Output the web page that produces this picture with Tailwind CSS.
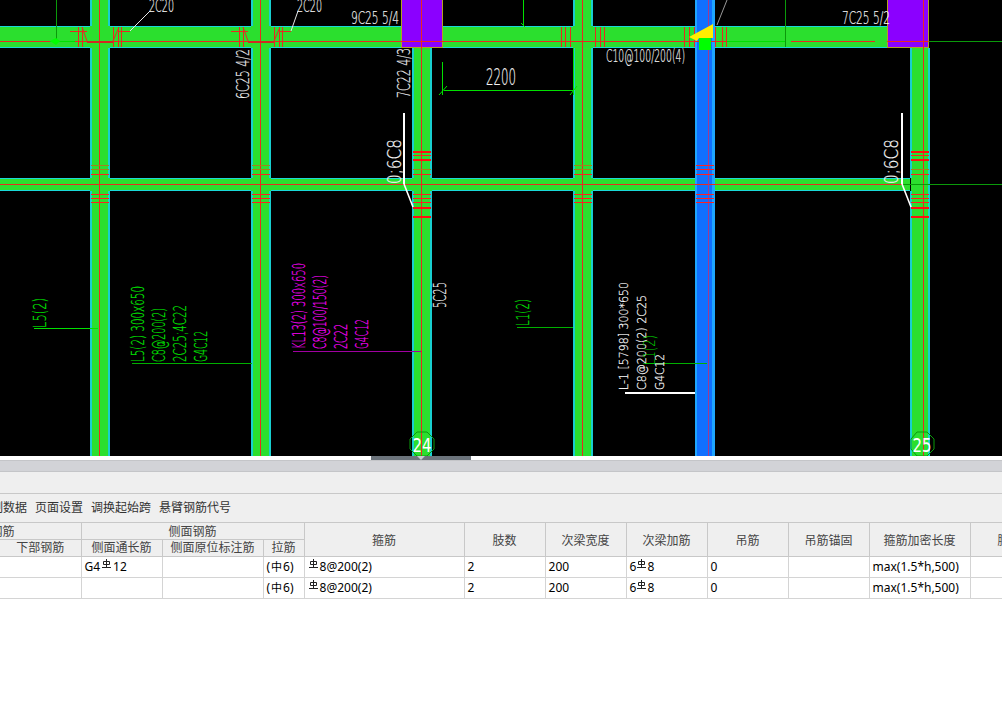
<!DOCTYPE html>
<html lang="zh">
<head>
  <meta charset="UTF-8">
  <title>梁平法表格</title>
  <script src="https://cdn.jsdelivr.net/npm/@tailwindcss/browser@4"></script>
</head>
<body class="bg-white w-[1002px] h-[727px] overflow-hidden font-['Noto_Sans','Noto_Sans_CJK_SC',sans-serif] text-[12px]">

  <!-- 图纸区域 -->
  <svg class="block" width="1002" height="456" viewBox="0 0 1002 456" font-family="DejaVu Sans, Liberation Sans, sans-serif" font-weight="200">
    <rect width="1002" height="456" fill="#000"/>
    <g shape-rendering="crispEdges">
      <!-- 框架梁 -->
      <rect x="0" y="26" width="887" height="22" fill="#2bdf2e"/>
      <rect x="0" y="178" width="910" height="13" fill="#2bdf2e"/>
      <rect x="91" y="0" width="18" height="456" fill="#2bdf2e"/>
      <rect x="252" y="0" width="18" height="456" fill="#2bdf2e"/>
      <rect x="413" y="48" width="18" height="408" fill="#2bdf2e"/>
      <rect x="574" y="0" width="18" height="456" fill="#2bdf2e"/>
      <rect x="911" y="48" width="18" height="408" fill="#2bdf2e"/>
      <!-- 青色边线 -->
      <path fill="none" stroke="#19d8d8" d="M0 26.5H90M110 26.5H251M271 26.5H401M443 26.5H573M593 26.5H892M0 47.5H90M110 47.5H251M271 47.5H401M443 47.5H573M593 47.5H887M0 178.5H90M110 178.5H251M271 178.5H412M432 178.5H573M593 178.5H910M0 190.5H90M110 190.5H251M271 190.5H412M432 190.5H573M593 190.5H910"/>
      <path fill="none" stroke="#18cfd0" stroke-width="2" d="M91 0V26M109 0V26M91 48V178M109 48V178M91 191V456M109 191V456M252 0V26M270 0V26M252 48V178M270 48V178M252 191V456M270 191V456M413 48V178M431 48V178M413 191V456M431 191V456M574 0V26M592 0V26M574 48V178M592 48V178M574 191V456M592 191V456M911 48V178M929 48V456M911 191V456"/>
      <!-- 蓝色选中梁 -->
      <rect x="695" y="0" width="20" height="456" fill="#1ea6ff"/>
      <rect x="697" y="0" width="15" height="456" fill="#1070ff"/>
      <!-- 柱 -->
      <rect x="401.5" y="-1" width="41" height="48.5" fill="#8b00ff" stroke="#b5a020"/>
      <rect x="887.5" y="-1" width="41" height="48.5" fill="#8b00ff" stroke="#b5a020"/>
      <!-- 中心红线 -->
      <path fill="none" stroke="#e82a20" d="M0 41.5H727M791 41.5H875M887 41.5H929M0 184.5H903M99.5 0V456M260.5 0V456M421.5 0V456M582.5 0V456M923.5 0V456"/>
      <path fill="none" stroke="#a03a90" d="M708.5 0V456"/>
      <path fill="none" stroke="#d02a20" stroke-width="2" d="M87 42H113M248 42H274"/>
      <!-- 箍筋加密线 -->
      <path fill="none" stroke="#a4801c" d="M91 165.5H109M91 169.5H109M252 165.5H270M252 169.5H270M574 165.5H592M574 169.5H592M413 169.5H431M911 169.5H929"/>
      <path fill="none" stroke="#ff2020" d="M91 174.5H109M91 194.5H109M91 198.5H109M91 202.5H109M252 174.5H270M252 194.5H270M252 198.5H270M252 202.5H270M574 174.5H592M574 194.5H592M574 198.5H592M574 202.5H592M696 165.5H714M696 169.5H714M696 174.5H714M696 194.5H714M696 198.5H714M696 202.5H714M413 174.5H431M413 194.5H431M413 198.5H431M413 202.5H431M911 174.5H929M911 194.5H929M911 198.5H929M911 202.5H929"/>
      <path fill="none" stroke="#ff1010" stroke-width="2" d="M413 152H431M413 160H431M413 208H431M413 217H431M911 152H929M911 160H929M911 208H929M911 217H929"/>
      <path fill="none" stroke="#ff2020" d="M413 155.5H431M911 155.5H929"/>
      <!-- 梁上竖向箍筋 -->
      <path fill="none" stroke="#e82a20" d="M78.5 27V47M82.5 27V47M113.5 27V47M118.5 27V47M121.5 27V47M239.5 27V47M243.5 27V47M274.5 27V47M279.5 27V47M282.5 27V47M561.5 27V47M565.5 27V47M570.5 27V47M595.5 27V47M600.5 27V47M604.5 27V47M684.5 27V47M689.5 27V47M694.5 27V47M715.5 27V47M722.5 27V47M726.5 27V47M70 31.5H87M231 31.5H248M119 31.5H130M280 31.5H291"/>
      <!-- 绿色标注线 -->
      <path fill="none" stroke="#0a9a0a" d="M56.5 0V41M785.5 0V47M929 41.5H1002M903 184.5H1002"/>
      <path fill="none" stroke="#00e000" d="M523.5 0V26M50 41.5H75M727 41.5H785M443.5 90.5H573M442.5 62V95M573.5 48V95M34 328.5H98"/>
      <path fill="none" stroke="#00b000" d="M132 363.5H252M517 327.5H573M645 363.5H707"/>
      <path fill="none" stroke="#a000a0" d="M293 351.5H421"/>
      <path fill="none" stroke="#fff" stroke-width="2" d="M404 113V184M902 113V184"/>
      <rect x="625" y="392" width="70" height="2" fill="#fff"/>
      <rect x="699" y="38" width="12" height="12" fill="#00ff00"/>
    </g>

    <!-- 斜线 -->
    <path fill="none" stroke="#e82a20" d="M82 27L87 41M113 41L119 27M243 27L248 41M274 41L280 27"/>
    <path fill="none" stroke="#00e000" d="M439 95L447 86M570 95L577 86M521 23L525 27"/>
    <path fill="none" stroke="#e8e8e8" d="M130 31L150 11M291 31L298 11"/>
    <path fill="none" stroke="#fff" stroke-width="1.6" d="M404 184L413 207M902 184L911 207"/>
    <path fill="none" stroke="#999" d="M717 25L727 0"/>
    <polygon points="689,37 713,24 713,38 699,38 697,41" fill="#ffee00"/>
    <polygon points="50,41 56,38 60,41 56,45" fill="#00ff00"/>

    <!-- 水平文字 -->
    <g fill="#f4f4f4" stroke="#f4f4f4" stroke-width="0.2" font-size="17">
      <text x="149" y="12" textLength="25" lengthAdjust="spacingAndGlyphs">2C20</text>
      <text x="297" y="12" textLength="25" lengthAdjust="spacingAndGlyphs">2C20</text>
      <text x="351" y="24" textLength="48" lengthAdjust="spacingAndGlyphs">9C25 5/4</text>
      <text x="842" y="24" textLength="48" lengthAdjust="spacingAndGlyphs">7C25 5/2</text>
      <text x="606" y="62" textLength="79" lengthAdjust="spacingAndGlyphs">C10@100/200(4)</text>
      <text x="486" y="85" textLength="30" lengthAdjust="spacingAndGlyphs" font-size="23">2200</text>
    </g>

    <!-- 竖向文字 -->
    <g fill="#f4f4f4" stroke="#f4f4f4" stroke-width="0.2" font-size="17">
      <text transform="translate(249 99) rotate(-90)" textLength="50" lengthAdjust="spacingAndGlyphs">6C25 4/2</text>
      <text transform="translate(410 98) rotate(-90)" textLength="50" lengthAdjust="spacingAndGlyphs">7C22 4/3</text>
      <text transform="translate(446 308) rotate(-90)" textLength="26" lengthAdjust="spacingAndGlyphs">5C25</text>
      <text transform="translate(401 184) rotate(-90)" textLength="45" lengthAdjust="spacingAndGlyphs" font-size="20">0;6C8</text>
      <text transform="translate(898 184) rotate(-90)" textLength="45" lengthAdjust="spacingAndGlyphs" font-size="20">0;6C8</text>
    </g>
    <g fill="#00e800" stroke="#00e800" stroke-width="0.2" font-size="17">
      <text transform="translate(46 328) rotate(-90)" textLength="30" lengthAdjust="spacingAndGlyphs">L5(2)</text>
      <text transform="translate(144 362) rotate(-90)" textLength="76" lengthAdjust="spacingAndGlyphs">L5(2) 300x650</text>
      <text transform="translate(165 362) rotate(-90)" textLength="54" lengthAdjust="spacingAndGlyphs">C8@200(2)</text>
      <text transform="translate(186 362) rotate(-90)" textLength="57" lengthAdjust="spacingAndGlyphs">2C25;4C22</text>
      <text transform="translate(207 362) rotate(-90)" textLength="31" lengthAdjust="spacingAndGlyphs">G4C12</text>
      <text transform="translate(529 326) rotate(-90)" textLength="27" lengthAdjust="spacingAndGlyphs">L1(2)</text>
    </g>
    <g fill="#ff00ff" stroke="#ff00ff" stroke-width="0.2" font-size="17">
      <text transform="translate(305 349) rotate(-90)" textLength="86" lengthAdjust="spacingAndGlyphs">KL13(2) 300x650</text>
      <text transform="translate(326 349) rotate(-90)" textLength="74" lengthAdjust="spacingAndGlyphs">C8@100/150(2)</text>
      <text transform="translate(347 349) rotate(-90)" textLength="25" lengthAdjust="spacingAndGlyphs">2C22</text>
      <text transform="translate(368 349) rotate(-90)" textLength="30" lengthAdjust="spacingAndGlyphs">G4C12</text>
    </g>
    <g fill="#fff" stroke="#fff" stroke-width="0.2" font-size="13">
      <text transform="translate(628 390) rotate(-90)" textLength="108" lengthAdjust="spacingAndGlyphs">L-1 [5798] 300*650</text>
      <text transform="translate(646 390) rotate(-90)" textLength="95" lengthAdjust="spacingAndGlyphs">C8@200(2) 2C25</text>
      <text transform="translate(664 390) rotate(-90)" textLength="36" lengthAdjust="spacingAndGlyphs">G4C12</text>
    </g>
    <text transform="translate(655 365) rotate(-90)" textLength="30" lengthAdjust="spacingAndGlyphs" fill="#00d000" font-size="15">L1(2)</text>

    <!-- 轴号 -->
    <polygon points="417,432 427,432 434,439 434,449 427,456 417,456 410,449 410,439" fill="none" stroke="#0a9a0a"/>
    <polygon points="917,432 927,432 934,439 934,449 927,456 917,456 911,449 911,439" fill="none" stroke="#0a9a0a"/>
    <text x="412.5" y="452" fill="#fff" font-size="20" font-weight="400" textLength="19" lengthAdjust="spacingAndGlyphs">24</text>
    <text x="912.5" y="452" fill="#fff" font-size="20" font-weight="400" textLength="19" lengthAdjust="spacingAndGlyphs">25</text>
  </svg>

  <!-- 分隔条 -->
  <div class="h-1 bg-white flex justify-start">
    <div class="ml-[371px] w-[100px] h-1 bg-[#6c747c]">
      <svg class="block ml-[46px]" width="8" height="4" viewBox="0 0 8 4"><polygon points="0,0 8,0 4,4" fill="#c8ccd0"/></svg>
    </div>
  </div>
  <div class="h-3 bg-[#d2d3d7] border-t border-b border-[#c4c5c8]"></div>

  <!-- 工具栏 -->
  <div class="h-[22px] bg-[#efefef] border-b border-[#c8c8c8]"></div>
  <div class="h-[29px] bg-[#efefef] border-b border-[#c8c8c8] flex items-center gap-2 -ml-[21px] text-[#333] whitespace-nowrap">
    <span>复制数据</span>
    <span>页面设置</span>
    <span>调换起始跨</span>
    <span>悬臂钢筋代号</span>
  </div>

  <!-- 表格 -->
  <div class="w-[1002px] overflow-hidden">
  <table class="table-fixed border-collapse w-[1049px] text-black leading-[16px]">
    <colgroup>
      <col class="w-[81px]"><col class="w-[81px]"><col class="w-[101px]"><col class="w-[41px]"><col class="w-[160px]"><col class="w-[81px]"><col class="w-[81px]"><col class="w-[81px]"><col class="w-[81px]"><col class="w-[81px]"><col class="w-[101px]"><col class="w-[79px]">
    </colgroup>
    <thead class="bg-[#efefef] text-[#444]">
      <tr class="h-[16px] leading-[13px]">
        <th class="font-normal border-b border-r border-[#c8c8c8] p-0 pt-[2px] overflow-hidden"><div class="flex justify-end pr-[66px] whitespace-nowrap">钢筋</div></th>
        <th colspan="3" class="font-normal border-b border-r border-[#c8c8c8] p-0 pt-[2px]">侧面钢筋</th>
        <th rowspan="2" class="font-normal border-b border-r border-[#c8c8c8] p-0 pt-[2px]">箍筋</th>
        <th rowspan="2" class="font-normal border-b border-r border-[#c8c8c8] p-0 pt-[2px]">肢数</th>
        <th rowspan="2" class="font-normal border-b border-r border-[#c8c8c8] p-0 pt-[2px]">次梁宽度</th>
        <th rowspan="2" class="font-normal border-b border-r border-[#c8c8c8] p-0 pt-[2px]">次梁加筋</th>
        <th rowspan="2" class="font-normal border-b border-r border-[#c8c8c8] p-0 pt-[2px]">吊筋</th>
        <th rowspan="2" class="font-normal border-b border-r border-[#c8c8c8] p-0 pt-[2px]">吊筋锚固</th>
        <th rowspan="2" class="font-normal border-b border-r border-[#c8c8c8] p-0 pt-[2px]">箍筋加密长度</th>
        <th rowspan="2" class="font-normal border-b border-r border-[#c8c8c8] p-0 pt-[2px]">腰筋</th>
      </tr>
      <tr class="h-[17px]">
        <th class="font-normal border-b border-r border-[#c8c8c8] p-0">下部钢筋</th>
        <th class="font-normal border-b border-r border-[#c8c8c8] p-0">侧面通长筋</th>
        <th class="font-normal border-b border-r border-[#c8c8c8] p-0">侧面原位标注筋</th>
        <th class="font-normal border-b border-r border-[#c8c8c8] p-0">拉筋</th>
      </tr>
    </thead>
    <tbody>
      <tr class="h-[21px]">
        <td class="border-b border-r border-[#d4d4d4] p-0 pl-[3px]"></td>
        <td class="border-b border-r border-[#d4d4d4] p-0 pl-[3px]">G4<svg class="inline-block align-[2px] mx-[2px]" width="9" height="10" viewBox="0 0 9 10" fill="none" stroke="#222"><path d="M1.5 2.5h6v3h-6zM4.5 0v8M0 8.5h9"/></svg>12</td>
        <td class="border-b border-r border-[#d4d4d4] p-0 pl-[3px]"></td>
        <td class="border-b border-r border-[#d4d4d4] p-0 pl-[3px]">(<span class="text-[11px] mx-px font-['Noto_Sans_CJK_SC']">中</span>6)</td>
        <td class="border-b border-r border-[#d4d4d4] p-0 pl-[4px]"><svg class="inline-block align-[2px] mr-[2px]" width="9" height="10" viewBox="0 0 9 10" fill="none" stroke="#222"><path d="M1.5 2.5h6v3h-6zM4.5 0v8M0 8.5h9"/></svg>8@200(2)</td>
        <td class="border-b border-r border-[#d4d4d4] p-0 pl-[3px]">2</td>
        <td class="border-b border-r border-[#d4d4d4] p-0 pl-[3px]">200</td>
        <td class="border-b border-r border-[#d4d4d4] p-0 pl-[3px]">6<svg class="inline-block align-[2px] mx-px" width="9" height="10" viewBox="0 0 9 10" fill="none" stroke="#222"><path d="M1.5 2.5h6v3h-6zM4.5 0v8M0 8.5h9"/></svg>8</td>
        <td class="border-b border-r border-[#d4d4d4] p-0 pl-[3px]">0</td>
        <td class="border-b border-r border-[#d4d4d4] p-0 pl-[3px]"></td>
        <td class="border-b border-r border-[#d4d4d4] p-0 pl-[3px]">max(1.5*h,500)</td>
        <td class="border-b border-r border-[#d4d4d4] p-0 pl-[3px]"></td>
      </tr>
      <tr class="h-[21px]">
        <td class="border-b border-r border-[#d4d4d4] p-0 pl-[3px]"></td>
        <td class="border-b border-r border-[#d4d4d4] p-0 pl-[3px]"></td>
        <td class="border-b border-r border-[#d4d4d4] p-0 pl-[3px]"></td>
        <td class="border-b border-r border-[#d4d4d4] p-0 pl-[3px]">(<span class="text-[11px] mx-px font-['Noto_Sans_CJK_SC']">中</span>6)</td>
        <td class="border-b border-r border-[#d4d4d4] p-0 pl-[4px]"><svg class="inline-block align-[2px] mr-[2px]" width="9" height="10" viewBox="0 0 9 10" fill="none" stroke="#222"><path d="M1.5 2.5h6v3h-6zM4.5 0v8M0 8.5h9"/></svg>8@200(2)</td>
        <td class="border-b border-r border-[#d4d4d4] p-0 pl-[3px]">2</td>
        <td class="border-b border-r border-[#d4d4d4] p-0 pl-[3px]">200</td>
        <td class="border-b border-r border-[#d4d4d4] p-0 pl-[3px]">6<svg class="inline-block align-[2px] mx-px" width="9" height="10" viewBox="0 0 9 10" fill="none" stroke="#222"><path d="M1.5 2.5h6v3h-6zM4.5 0v8M0 8.5h9"/></svg>8</td>
        <td class="border-b border-r border-[#d4d4d4] p-0 pl-[3px]">0</td>
        <td class="border-b border-r border-[#d4d4d4] p-0 pl-[3px]"></td>
        <td class="border-b border-r border-[#d4d4d4] p-0 pl-[3px]">max(1.5*h,500)</td>
        <td class="border-b border-r border-[#d4d4d4] p-0 pl-[3px]"></td>
      </tr>
    </tbody>
  </table>
  </div>
</body>
</html>
